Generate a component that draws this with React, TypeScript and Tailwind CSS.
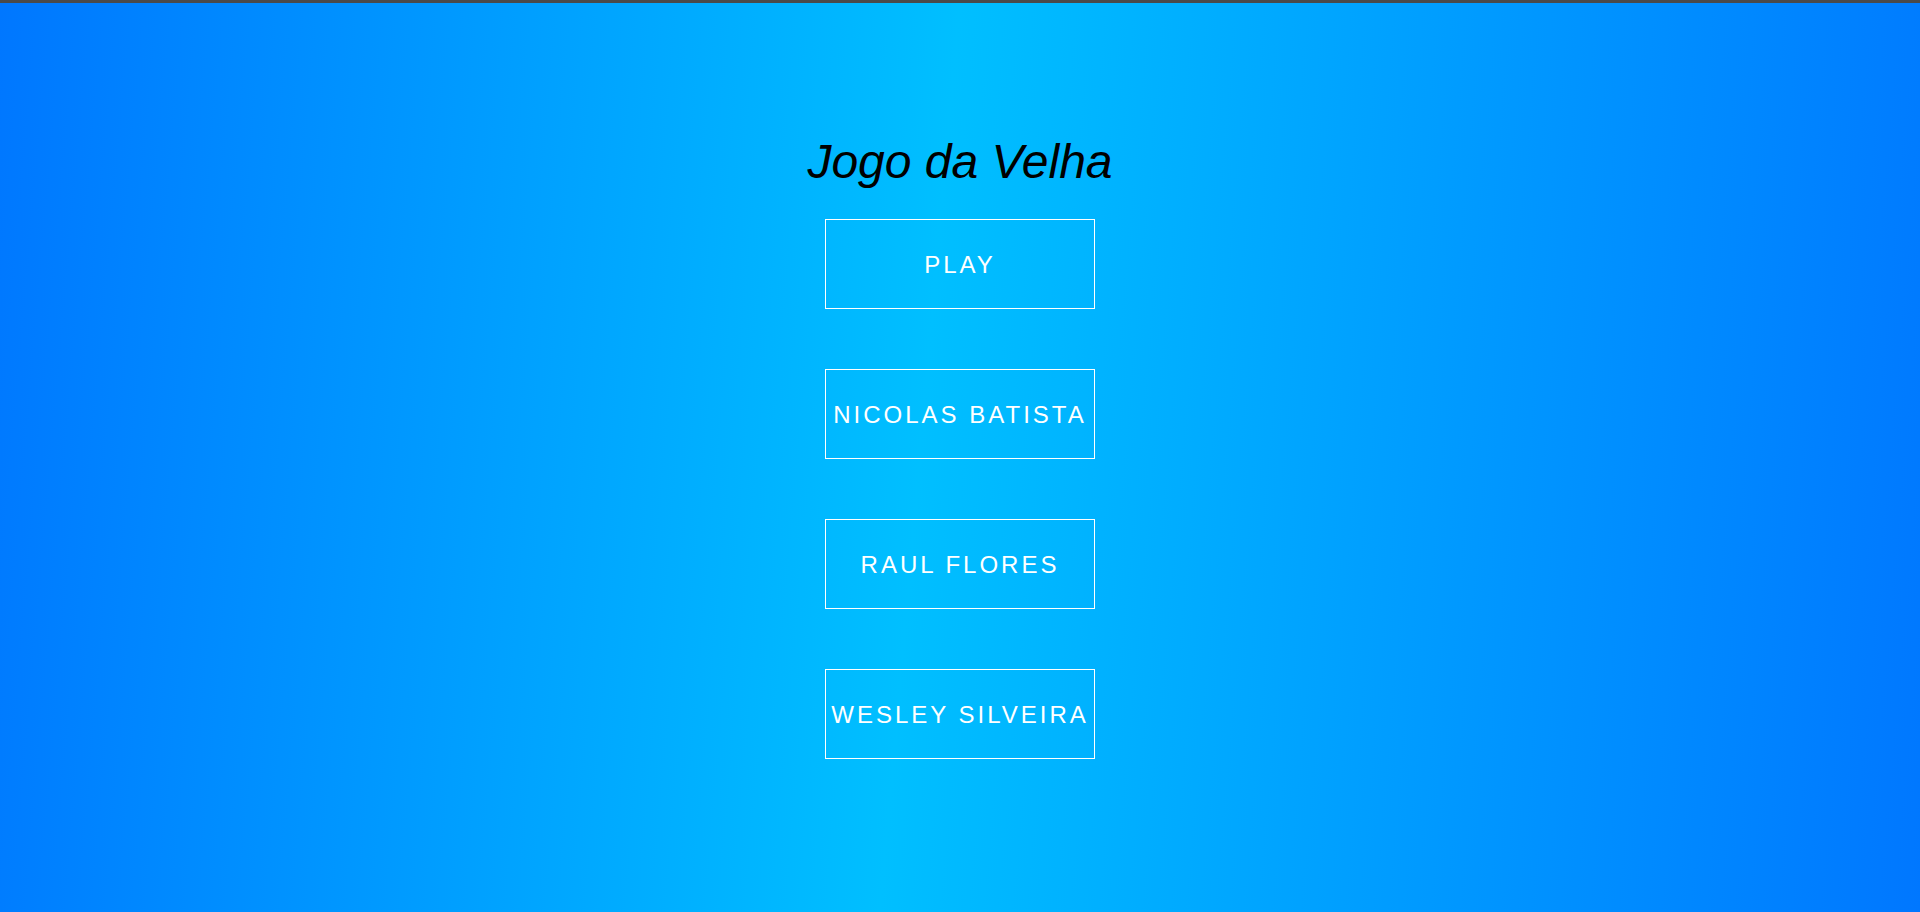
const players = ["PLAY", "NICOLAS BATISTA", "RAUL FLORES", "WESLEY SILVEIRA"];

export default function App() {
  return (
    <div className="min-h-screen flex flex-col bg-[linear-gradient(95deg,#0077ff_0%,#00bfff_48%,#0077ff_100%)] font-['Liberation_Sans',Arial,sans-serif]">
      <div className="h-[3px] bg-[#4a4a4a]" />
      <main className="flex flex-col items-center pt-[131px]">
        <h1 className="text-[48px] leading-[56px] italic text-black mb-[29px]">Jogo da Velha</h1>
        <div className="flex flex-col gap-[60px]">
          {players.map((label) => (
            <button
              key={label}
              className="w-[270px] h-[90px] border border-white text-white text-[24px] tracking-[3px] flex items-center justify-center pt-[2px]"
            >
              {label}
            </button>
          ))}
        </div>
      </main>
    </div>
  );
}
